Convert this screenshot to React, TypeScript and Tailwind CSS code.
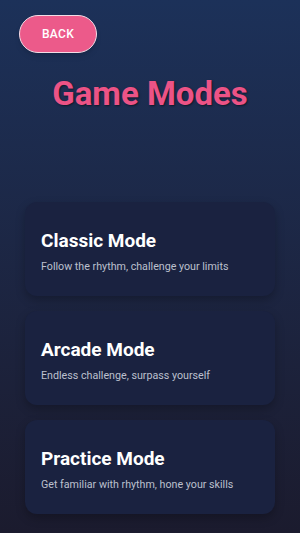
export default function App() {
  const modes = [
    { title: 'Classic Mode', desc: 'Follow the rhythm, challenge your limits' },
    { title: 'Arcade Mode', desc: 'Endless challenge, surpass yourself' },
    { title: 'Practice Mode', desc: 'Get familiar with rhythm, hone your skills' },
  ];

  return (
    <main
      className="w-[300px] h-[533px] overflow-hidden bg-gradient-to-b from-[#1c3159] to-[#1b1b2e] flex flex-col"
      style={{ fontFamily: 'Roboto, "Noto Sans", sans-serif' }}
    >
      <div className="pl-[19px] pt-[15px]">
        <button className="w-[78px] h-[38px] rounded-full bg-[#ec5a8a] border border-[#f3dce6] text-white text-[12px] font-medium tracking-wide shadow-md">
          BACK
        </button>
      </div>

      <h1 className="mt-[22px] text-center text-[33px] leading-[38px] font-bold text-[#ec5386] [text-shadow:1px_1px_2px_rgba(0,0,0,0.5)]">
        Game Modes
      </h1>

      <div className="mt-[89px] px-[25px] flex flex-col gap-[15px]">
        {modes.map((m) => (
          <div
            key={m.title}
            className="h-[94px] rounded-[12px] bg-[#1a2240] shadow-[0_4px_10px_rgba(0,0,0,0.25)] px-4 pt-[5px] flex flex-col justify-center"
          >
            <h2 className="text-[19px] leading-[23px] font-bold text-white">{m.title}</h2>
            <p className="mt-[8px] text-[10.7px] leading-[14px] text-[#bcc0ce]">{m.desc}</p>
          </div>
        ))}
      </div>
    </main>
  );
}
